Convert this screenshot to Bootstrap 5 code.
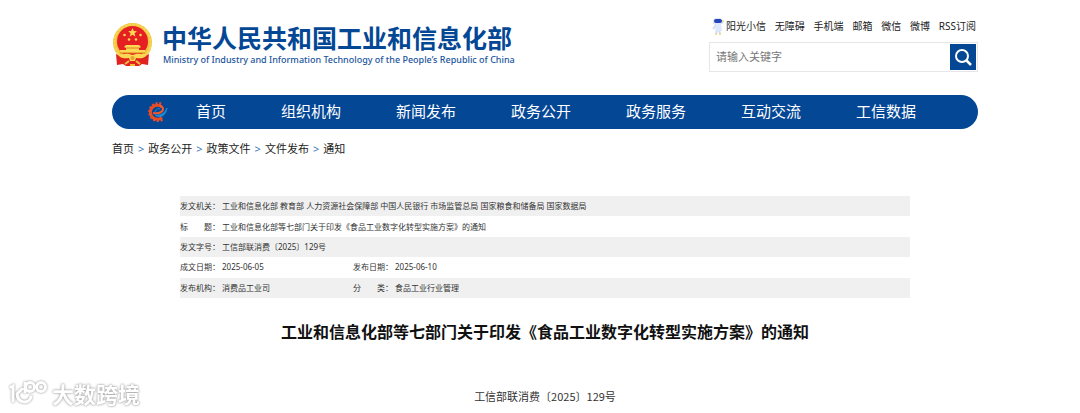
<!DOCTYPE html>
<html lang="zh-CN">
<head>
<meta charset="utf-8">
<meta name="viewport" content="width=device-width, initial-scale=1">
<title>工业和信息化部等七部门关于印发《食品工业数字化转型实施方案》的通知</title>
<link href="https://cdn.jsdelivr.net/npm/bootstrap@5.3.0/dist/css/bootstrap.min.css" rel="stylesheet">
<style>
:root { --brand: #044795; }
body { font-family: "Noto Sans", "Noto Sans CJK SC", sans-serif; color: #222; background: #fff; font-size: 11px; line-height: 16px; padding-left: 10px; }
a { color: inherit; text-decoration: none; }
.site { max-width: 866px; }
.site-head { padding-top: 16px; }
.logo { padding-top: 6px; }
.logo-text { padding-top: 2px; }
.logo-cn { font-family: "Liberation Sans", "Noto Sans CJK SC", sans-serif; font-size: 25px; line-height: 30px; font-weight: 700; color: var(--brand); }
.logo-en { font-size: 9px; line-height: 12px; font-weight: 500; color: #1b559c; padding-left: 1px; }
.tools { width: 269px; }
.quick { font-size: 10px; line-height: 20px; padding-right: 2px; }
.search { border: 1px solid #e6e6e6; padding: 1px; margin-top: 6px; height: 30px; }
.search input { font-size: 11px; border: 0; padding: 0 5px; color: #555; outline: 0; min-width: 0; }
.search input::placeholder { color: #777; opacity: 1; }
.search button { width: 26px; height: 26px; background: var(--brand); border: 0; padding: 0; }
.main-nav { background: var(--brand); border-radius: 17px; min-height: 34px; margin-top: 23px; padding: 0 34px; color: #fff; font-size: 15px; line-height: 32px; }
.main-nav ul { column-gap: 55px; padding: 0 0 2px 28px; }
.crumbs { margin-top: 12px; --bs-breadcrumb-divider: ">"; font-size: 11px; }
.crumbs .breadcrumb-item + .breadcrumb-item { padding-left: 4px; }
.crumbs .breadcrumb-item + .breadcrumb-item::before { padding-right: 4px; color: #3a78bb; }
.article { max-width: 730px; }
.meta { margin-top: 39px; height: 102px; font-size: 8px; line-height: 12px; color: #333; }
.meta th, .meta td { padding: 0; font-weight: 400; vertical-align: middle; }
.meta tr:nth-child(odd) { background: #f0f0f0; }
.meta th { width: 42px; white-space: nowrap; }
.meta .first-value { width: 131px; }
.doc-title { font-family: "Noto Sans CJK SC", sans-serif; font-size: 16px; line-height: 24px; font-weight: 700; color: #111; margin-top: 21px; }
.doc-no { font-family: "Noto Sans CJK SC", sans-serif; margin-top: 44px; font-size: 11px; line-height: 18px; color: #333; }
.watermark { left: 8px; bottom: 5px; color: #fff; font-family: "Noto Sans CJK SC", sans-serif; font-size: 22px; line-height: 28px; font-weight: 700; text-shadow: 0 0 2px #999, 0 0 3px #bbb; }
.watermark svg { filter: drop-shadow(0 0 1px #888); }
</style>
</head>
<body>
<div class="site mx-auto">
  <header class="site-head d-flex flex-wrap justify-content-between">
    <a href="#" class="logo d-flex align-items-start">
      <svg width="42" height="46" viewBox="0 0 42 46" aria-hidden="true">
        <circle cx="20.500" cy="20.500" r="19.500" fill="#f0c544"/>
        <circle cx="20.500" cy="20.500" r="18" fill="none" stroke="#f9d74e" stroke-width="2" stroke-dasharray="3 1"/>
        <path d="M4 32 5 43l6-1 3 2h13l3-2 6 1 1-11-7 4H11z" fill="#df2420"/>
        <circle cx="20.500" cy="19.500" r="15.500" fill="#e51f22"/>
        <g fill="#fbd955">
          <path d="m20.500 6 1.300 3 3.200.2-2.500 2 .9 3.200-2.900-1.700-2.800 1.700.9-3.200-2.500-2 3.100-.2z"/>
          <circle cx="12.500" cy="13" r="1.300"/><circle cx="28.500" cy="13" r="1.300"/><circle cx="17" cy="17.500" r="1.300"/><circle cx="24" cy="17.500" r="1.300"/>
          <path d="M14 23h13l2 2-2 1v2h6v3H8v-3h6v-2l-2-1z"/>
          <path d="M5 31c6 3 8 0 12 1l3.500 1 3.500-1c4-1 6 2 12-1l-3 4c-4 2-6 1-9 1l-1 3h-5l-1-3c-3 0-5 1-9-1z"/>
        </g>
        <path d="M14 26h13M8 31h25" stroke="#df7d20"/>
        <circle cx="20.500" cy="36" r="2" fill="#e8a12c"/>
        <path d="M13 42l4-3M28 42l-4-3M18 43h5" stroke="#f4bd40" stroke-width="2"/>
      </svg>
      <span class="logo-text d-flex flex-column ps-2">
        <span class="logo-cn">中华人民共和国工业和信息化部</span>
        <span class="logo-en">Ministry of Industry and Information Technology of the People’s Republic of China</span>
      </span>
    </a>
    <div class="tools">
      <div class="quick d-flex justify-content-between">
        <a href="#" class="d-flex align-items-center">
          <svg width="17" height="20" viewBox="0 0 17 20" aria-hidden="true">
            <path d="M8 8 4 13M10 8l4-2M8 14l-1 4M10 14l1 4" stroke="#cfdcf3" stroke-width="2"/>
            <path d="M7 8h5l1 7H6z" fill="#dde8fa"/>
            <rect x="4" y="2" width="9" height="7" rx="3" fill="#dce7fa"/><rect x="5" y="3" width="8" height="4" rx="2" fill="#2444b8"/>
            <path d="M6 18h2M10 18h2M14 4v2" stroke="#f1c84e"/>
          </svg>阳光小信</a>
        <a href="#">无障碍</a><a href="#">手机端</a><a href="#">邮箱</a><a href="#">微信</a><a href="#">微博</a><a href="#">RSS订阅</a>
      </div>
      <form class="search d-flex" role="search">
        <input type="text" class="flex-grow-1" placeholder="请输入关键字" aria-label="请输入关键字">
        <button type="button" aria-label="搜索"><svg class="d-block mx-auto" width="20" height="20" viewBox="0 0 20 20" fill="none" stroke="#fff" stroke-width="2"><circle cx="9" cy="9" r="6"/><path d="m13 13 5 5" stroke-width="2.500"/></svg></button>
      </form>
    </div>
  </header>

  <nav class="main-nav d-flex align-items-center">
    <svg class="flex-shrink-0" width="22" height="22" viewBox="0 0 22 22" fill="none" aria-hidden="true">
      <path d="M15 3A8.500 8.500 0 1 0 17 18" stroke="#e0502f" stroke-width="3" stroke-dasharray="2 1.500"/>
      <path d="M16 6A7 7 0 1 0 16 16.500" stroke="#e84c25" stroke-width="3"/>
      <path d="M7 12c6 1 10-1 10-4 0-2-2-3-3-3" stroke="#f0592c" stroke-width="2"/>
      <path d="M9 14c6 1 10-2 12-7-1 7-6 11-12 7z" fill="#238bd0" stroke="#238bd0"/>
      <path d="M9 11c1-3 3-4 5-3" stroke="#238bd0"/>
    </svg>
    <ul class="list-unstyled d-flex flex-wrap mb-0">
      <li><a href="#">首页</a></li><li><a href="#">组织机构</a></li><li><a href="#">新闻发布</a></li><li><a href="#">政务公开</a></li><li><a href="#">政务服务</a></li><li><a href="#">互动交流</a></li><li><a href="#">工信数据</a></li>
    </ul>
  </nav>

  <nav class="crumbs" aria-label="breadcrumb">
    <ol class="breadcrumb mb-0">
      <li class="breadcrumb-item"><a href="#">首页</a></li><li class="breadcrumb-item"><a href="#">政务公开</a></li><li class="breadcrumb-item"><a href="#">政策文件</a></li><li class="breadcrumb-item"><a href="#">文件发布</a></li><li class="breadcrumb-item"><a href="#">通知</a></li>
    </ol>
  </nav>

  <main class="article mx-auto">
    <table class="meta w-100">
      <tbody>
        <tr><th scope="row">发文机关：</th><td colspan="3">工业和信息化部 教育部 人力资源社会保障部 中国人民银行 市场监管总局 国家粮食和储备局 国家数据局</td></tr>
        <tr><th scope="row">标　　题：</th><td colspan="3">工业和信息化部等七部门关于印发《食品工业数字化转型实施方案》的通知</td></tr>
        <tr><th scope="row">发文字号：</th><td colspan="3">工信部联消费〔2025〕129号</td></tr>
        <tr><th scope="row">成文日期：</th><td class="first-value">2025-06-05</td><th scope="row">发布日期：</th><td>2025-06-10</td></tr>
        <tr><th scope="row">发布机构：</th><td class="first-value">消费品工业司</td><th scope="row">分　　类：</th><td>食品工业行业管理</td></tr>
      </tbody>
    </table>
    <h1 class="doc-title text-center mb-0">工业和信息化部等七部门关于印发《食品工业数字化转型实施方案》的通知</h1>
    <p class="doc-no text-center mb-0">工信部联消费〔2025〕129号</p>
  </main>
</div>

<div class="watermark position-fixed d-flex align-items-center">
  <svg class="me-1" width="40" height="30" viewBox="0 0 40 30" fill="none" stroke="#fff" stroke-width="3" stroke-linecap="round" aria-hidden="true">
    <path d="M3 9l2-1v15M14 11l-5 5c1 10 12 10 14 3M17 5v9"/><circle cx="22" cy="9" r="4.500"/><circle cx="33" cy="9" r="4.500"/>
  </svg>大数跨境
</div>
<script src="https://cdn.jsdelivr.net/npm/bootstrap@5.3.0/dist/js/bootstrap.bundle.min.js"></script>
</body>
</html>
